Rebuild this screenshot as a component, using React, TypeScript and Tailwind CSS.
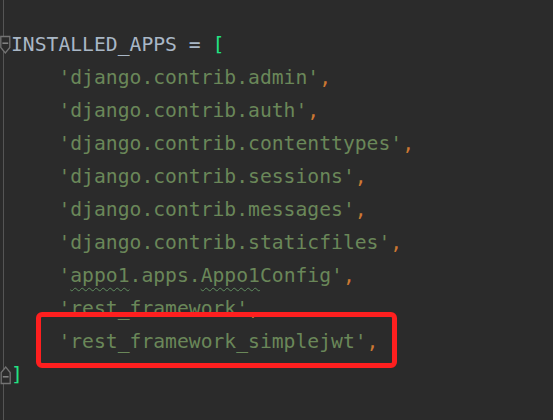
import React from 'react';

const wavy =
  'underline decoration-wavy decoration-[#5f8c5f] decoration-1 underline-offset-[5px]';

const apps: React.ReactNode[] = [
  'django.contrib.admin',
  'django.contrib.auth',
  'django.contrib.contenttypes',
  'django.contrib.sessions',
  'django.contrib.messages',
  'django.contrib.staticfiles',
  <>
    <span className={wavy}>appo1</span>.apps.<span className={wavy}>Appo1</span>Config
  </>,
  'rest_framework',
  'rest_framework_simplejwt',
];

const FoldMarker: React.FC<{ up?: boolean }> = ({ up }) => (
  <svg width="11" height="20" viewBox="0 0 11 20" className={up ? 'rotate-180' : ''}>
    <path
      d="M0.8 1.5 H9.8 V12.5 L5.3 18 L0.8 12.5 Z"
      fill="#2b2b2b"
      stroke="#737373"
      strokeWidth="1.3"
    />
    <path d="M2.4 8.2 H8.2" stroke="#8c8c8c" strokeWidth="1.4" />
  </svg>
);

// one editor line: gutter cell + code
const Line: React.FC<{ marker?: 'down' | 'up'; children: React.ReactNode }> = ({
  marker,
  children,
}) => (
  <div className="flex items-center">
    <div className="-ml-[4px] flex w-[11px] shrink-0 items-center">
      {marker && <FoldMarker up={marker === 'up'} />}
    </div>
    <div className="whitespace-pre">{children}</div>
  </div>
);

const App: React.FC = () => {
  return (
    <div className="relative h-[420px] w-[553px] overflow-hidden bg-[#2b2b2b] pl-[3px] font-['DejaVu_Sans_Mono',monospace] text-[19.7px]">
      <div className="h-full border-l border-[#555555] pt-[28px] leading-[33px]">
        <Line marker="down">
          <span className="text-[#a9b7c6]">INSTALLED_APPS = </span>
          <span className="text-[#22e384]">[</span>
        </Line>

        {apps.map((a, i) => (
          <Line key={i}>
            <span className="text-[#6a8759]">
              {"    '"}
              {a}
              {"'"}
            </span>
            <span className="text-[#cc7832]">,</span>
          </Line>
        ))}

        <Line marker="up">
          <span className="text-[#22e384]">]</span>
        </Line>
      </div>

      {/* red annotation box drawn over the code */}
      <div className="absolute left-[36px] top-[312px] h-[56px] w-[361px] rounded-[6px] border-[5px] border-[#fe1f1f]" />
    </div>
  );
};

export default App;
